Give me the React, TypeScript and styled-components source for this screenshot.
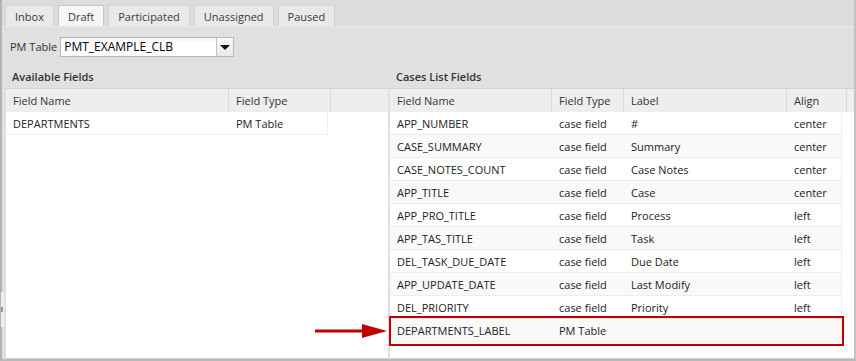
import React from 'react';
import styled, { createGlobalStyle } from 'styled-components';

const GlobalStyle = createGlobalStyle`
  html, body { margin: 0; padding: 0; background: #ffffff; }
  body {
    font-family: "Open Sans", "Liberation Sans", Arial, sans-serif;
    font-size: 11px;
    color: #222;
  }
  * { box-sizing: border-box; }
`;

const Frame = styled.div`
  position: relative;
  width: 856px;
  height: 361px;
  display: flex;
  flex-direction: column;
  background: #e0e0e0;
  border-left: 2px solid #b3b3b3;
  border-right: 2px solid #c2c2c2;
  border-bottom: 2px solid #bababa;
`;

const CollapseHandle = styled.div`
  position: absolute;
  left: -1px;
  top: 292px;
  width: 3px;
  height: 35px;
  background: #ededed;
  &::after {
    content: '';
    position: absolute;
    left: 0;
    top: 15px;
    width: 2px;
    height: 5px;
    background: #9a9a9a;
  }
`;

const TabStrip = styled.div`
  flex: none;
  height: 27px;
  display: flex;
  align-items: flex-end;
  gap: 4px;
  padding-left: 3px;
  background: #dcdcdc;
  border-bottom: 1px solid #e8e8e8;
`;

const Tab = styled.div<{ $active?: boolean }>`
  height: 21px;
  padding: 1px 9px 0;
  border: 1px solid ${(p) => (p.$active ? '#c8c8c8' : '#d3d3d3')};
  border-bottom: none;
  background: ${(p) => (p.$active ? '#f6f6f6' : '#e9e9e9')};
  color: #3a3a3a;
  font-size: 11px;
  line-height: 19px;
  white-space: nowrap;
`;

const Toolbar = styled.div`
  flex: none;
  height: 38px;
  display: flex;
  align-items: flex-start;
  gap: 3px;
  padding: 10px 0 0 8px;
`;

const FieldLabel = styled.span`
  color: #333;
  font-size: 11px;
  line-height: 20px;
`;

const Select = styled.div`
  display: flex;
  width: 174px;
  height: 20px;
  border: 1px solid #b7b7b7;
  background: linear-gradient(#f1f1f1, #ffffff 4px);
`;

const SelectText = styled.div`
  flex: 1;
  padding-left: 3px;
  font-size: 12px;
  line-height: 18px;
  color: #000;
  white-space: nowrap;
`;

const Trigger = styled.div`
  width: 17px;
  height: 100%;
  display: flex;
  align-items: center;
  justify-content: center;
  border-left: 1px solid #c4c4c4;
  background: linear-gradient(#fafafa, #e9e9e9);
`;

const Caret = styled.span`
  width: 0;
  height: 0;
  border-left: 5px solid transparent;
  border-right: 5px solid transparent;
  border-top: 5px solid #111;
`;

const Body = styled.div`
  flex: 1;
  min-height: 0;
  display: flex;
  gap: 2px;
  padding-left: 4px;
`;

const Panel = styled.div<{ $width?: number }>`
  display: flex;
  flex-direction: column;
  ${(p) => (p.$width ? `width: ${p.$width}px; flex: none;` : 'flex: 1;')}
  min-width: 0;
`;

const PanelTitle = styled.div`
  flex: none;
  height: 24px;
  padding: 1px 0 0 6px;
  font-weight: 600;
  font-size: 11px;
  line-height: 22px;
  color: #333;
  border-bottom: 1px solid #d4d4d4;
`;

const GridHeader = styled.div`
  flex: none;
  height: 23px;
  display: flex;
  background: #eeeeee;
`;

const HeaderCell = styled.div<{ $w?: number }>`
  ${(p) => (p.$w ? `width: ${p.$w}px; flex: none;` : 'flex: 1;')}
  padding: 1px 7px 0;
  line-height: 22px;
  color: #333;
  border-right: 1px solid #d9d9d9;
  white-space: nowrap;
  overflow: hidden;
  &:last-child { border-right: none; }
`;

const GridBody = styled.div`
  flex: 1;
  background: #ffffff;
  border-bottom: 1px solid #d0d0d0;
`;

const Row = styled.div<{ $w: number; $alt?: boolean }>`
  position: relative;
  width: ${(p) => p.$w}px;
  height: 23px;
  display: flex;
  background: ${(p) => (p.$alt ? '#f9f9f9' : '#ffffff')};
  border-bottom: 1px solid #ededed;
  border-right: 1px solid #ededed;
`;

const Cell = styled.div<{ $w: number }>`
  width: ${(p) => p.$w}px;
  flex: none;
  padding: 1px 7px 0;
  line-height: 21px;
  color: #222;
  white-space: nowrap;
  overflow: hidden;
`;

const Highlight = styled.div`
  position: absolute;
  left: -1px;
  top: -3px;
  width: 455px;
  height: 30px;
  border: 2px solid #c00000;
  pointer-events: none;
`;

const Arrow = styled.svg`
  position: absolute;
  left: -75px;
  top: 5px;
`;

const tabs = ['Inbox', 'Draft', 'Participated', 'Unassigned', 'Paused'];

const rightCols = [162, 72, 163, 55];
const rightRows: [string, string, string, string][] = [
  ['APP_NUMBER', 'case field', '#', 'center'],
  ['CASE_SUMMARY', 'case field', 'Summary', 'center'],
  ['CASE_NOTES_COUNT', 'case field', 'Case Notes', 'center'],
  ['APP_TITLE', 'case field', 'Case', 'center'],
  ['APP_PRO_TITLE', 'case field', 'Process', 'left'],
  ['APP_TAS_TITLE', 'case field', 'Task', 'left'],
  ['DEL_TASK_DUE_DATE', 'case field', 'Due Date', 'left'],
  ['APP_UPDATE_DATE', 'case field', 'Last Modify', 'left'],
  ['DEL_PRIORITY', 'case field', 'Priority', 'left'],
  ['DEPARTMENTS_LABEL', 'PM Table', '', ''],
];

export default function App() {
  return (
    <>
      <GlobalStyle />
      <Frame>
        <CollapseHandle />
        <TabStrip>
          {tabs.map((t) => (
            <Tab key={t} $active={t === 'Draft'}>
              {t}
            </Tab>
          ))}
        </TabStrip>
        <Toolbar>
          <FieldLabel>PM Table</FieldLabel>
          <Select>
            <SelectText>PMT_EXAMPLE_CLB</SelectText>
            <Trigger>
              <Caret />
            </Trigger>
          </Select>
        </Toolbar>
        <Body>
          <Panel $width={382}>
            <PanelTitle>Available Fields</PanelTitle>
            <GridHeader>
              <HeaderCell $w={223}>Field Name</HeaderCell>
              <HeaderCell $w={102}>Field Type</HeaderCell>
              <HeaderCell />
            </GridHeader>
            <GridBody>
              <Row $w={322}>
                <Cell $w={223}>DEPARTMENTS</Cell>
                <Cell $w={98}>PM Table</Cell>
              </Row>
            </GridBody>
          </Panel>
          <Panel>
            <PanelTitle>Cases List Fields</PanelTitle>
            <GridHeader>
              <HeaderCell $w={162}>Field Name</HeaderCell>
              <HeaderCell $w={72}>Field Type</HeaderCell>
              <HeaderCell $w={163}>Label</HeaderCell>
              <HeaderCell $w={60}>Align</HeaderCell>
              <HeaderCell />
            </GridHeader>
            <GridBody>
              {rightRows.map((r, i) => {
                const last = i === rightRows.length - 1;
                return (
                  <Row key={r[0]} $w={452} $alt={i % 2 === 1}>
                    {r.map((v, j) => (
                      <Cell key={j} $w={rightCols[j]}>
                        {v}
                      </Cell>
                    ))}
                    {last && (
                      <>
                        <Highlight />
                        <Arrow width="72" height="14" viewBox="0 0 72 14">
                          <line x1="0" y1="7" x2="50" y2="7" stroke="#c00000" strokeWidth="3" />
                          <polygon points="47,0 72,7 47,14" fill="#c00000" />
                        </Arrow>
                      </>
                    )}
                  </Row>
                );
              })}
            </GridBody>
          </Panel>
        </Body>
      </Frame>
    </>
  );
}
